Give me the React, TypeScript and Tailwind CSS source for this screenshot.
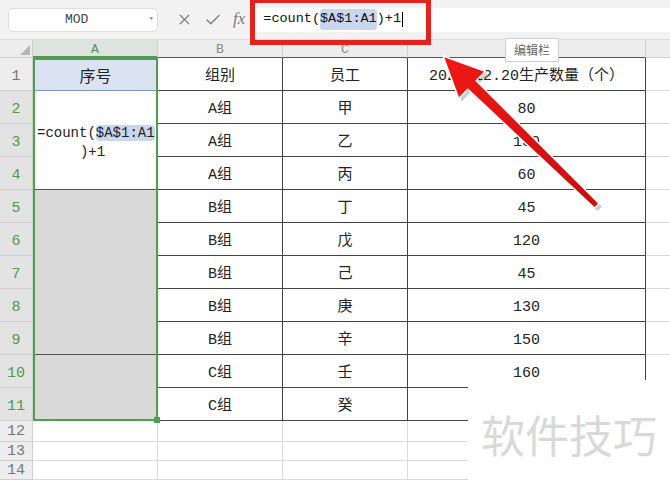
import { X, Check } from "lucide-react";

const rowsB = ["组别", "A组", "A组", "A组", "B组", "B组", "B组", "B组", "B组", "C组", "C组"];
const rowsC = ["员工", "甲", "乙", "丙", "丁", "戊", "己", "庚", "辛", "壬", "癸"];
const rowsD = ["2020.12.20生产数量（个）", "80", "130", "60", "45", "120", "45", "130", "150", "160", ""];

const font = "font-['Liberation_Mono','Noto_Sans_CJK_SC',monospace]";

export default function App() {
  return (
    <div className={`relative w-[670px] h-[480px] overflow-hidden bg-white text-[#222] ${font}`}>
      {/* formula bar */}
      <div className="flex items-center h-[40px] bg-[#f2f2f2] border-b border-[#dcdcdc]">
        <div className="ml-[8px] w-[150px] h-[24px] rounded-[5px] bg-white border border-[#dedede] flex items-center text-[13px] text-[#444]">
          <span className="ml-[56px]">MOD</span>
          <span className="ml-auto mr-[3px] text-[9px] text-[#999]">▾</span>
        </div>
        <div className="flex items-center gap-[11px] ml-[18px] text-[#7a7a7a]">
          <X size={17} strokeWidth={1.6} />
          <Check size={18} strokeWidth={1.8} />
          <span className="italic text-[17px] font-['Liberation_Serif',serif] -mt-[2px]">fx</span>
        </div>
        <div className="ml-[7px] flex-1 h-[24px] bg-white flex items-center pl-[11px] text-[13.5px] text-[#111]">
          <span>=count(</span>
          <span className="bg-[#c9d7ee] rounded-[3px]">$A$1:A1</span>
          <span>)+1</span>
          <span className="w-px h-[15px] bg-black ml-[1px]" />
        </div>
      </div>

      {/* sheet */}
      <div className="grid grid-cols-[33px_125px_125px_125px_238px_24px] grid-rows-[18px_repeat(11,33px)_21px_19px_19px]">
        {/* column headers */}
        <div className="bg-[#ededed] border-r border-b border-[#cfcfcf] flex items-end justify-end p-[2px]">
          <div className="w-0 h-0 border-l-[10px] border-l-transparent border-b-[10px] border-b-[#b5b5b5]" />
        </div>
        <div className="bg-[#dfe3df] border-r border-b-2 border-b-[#4f9a4f] border-r-[#cfcfcf] flex items-center justify-center pt-[3px] text-[13px] text-[#4f9a4f]">
          A
        </div>
        {["B", "C", "D"].map((c) => (
          <div
            key={c}
            className="bg-[#ededed] border-r border-[#cfcfcf] border-b border-b-[#555] flex items-center justify-center pt-[3px] text-[13px] text-[#888]"
          >
            {c === "D" ? "" : c}
          </div>
        ))}
        <div className="bg-[#ededed] border-b border-[#cfcfcf]" />

        {/* column A selection */}
        <div className="col-start-2 row-start-2 row-span-11 flex flex-col border-2 border-[#4f9e4f] relative">
          <div className="h-[31px] shrink-0 bg-[#dbe3f3] border-b border-[#7d93c3] flex items-center justify-center text-[16px] font-['Noto_Sans_CJK_SC',sans-serif]">
            序号
          </div>
          <div className="h-[99px] shrink-0 bg-white border-b border-[#555] flex flex-col justify-center pl-[2px] text-[14px] leading-[19px] pt-[6px]">
            <div>
              =count(<span className="bg-[#c9d7ee] rounded-[4px]">$A$1:A1</span>
            </div>
            <div className="text-center pr-[8px]">)+1</div>
          </div>
          <div className="h-[165px] shrink-0 bg-[#d9d9d9] border-b border-[#555]" />
          <div className="flex-1 bg-[#d9d9d9]" />
          <div className="absolute -right-[4px] -bottom-[4px] w-[6px] h-[6px] bg-[#4f9e4f]" />
        </div>

        {/* rows 1-11 */}
        {rowsB.map((b, i) => (
          <div key={i} className="contents">
            <div
              className={`col-start-1 flex items-center justify-center pt-[6px] border-r border-b border-[#cfcfcf] text-[15px] ${
                i > 0 ? "bg-[#e3e3e3] text-[#4f9a4f]" : "bg-[#ededed] text-[#777]"
              }`}
              style={{ gridRowStart: i + 2 }}
            >
              {i + 1}
            </div>
            <div
              className="col-start-3 border-r border-b border-[#444] flex items-center justify-center pt-[6px] text-[15px]"
              style={{ gridRowStart: i + 2 }}
            >
              {b}
            </div>
            <div
              className="col-start-4 border-r border-b border-[#444] flex items-center justify-center pt-[6px] text-[15px]"
              style={{ gridRowStart: i + 2 }}
            >
              {rowsC[i]}
            </div>
            <div
              className="col-start-5 border-r border-b border-[#444] flex items-center justify-center pt-[6px] text-[15px]"
              style={{ gridRowStart: i + 2 }}
            >
              {rowsD[i]}
            </div>
            <div
              className="col-start-6 border-b border-[#dadada]"
              style={{ gridRowStart: i + 2 }}
            />
          </div>
        ))}

        {/* rows 12-14 */}
        {[12, 13, 14].map((n) => (
          <div key={n} className="contents">
            <div className="flex items-center justify-center pt-[2px] bg-[#ededed] border-r border-b border-[#cfcfcf] text-[15px] text-[#777]">
              {n}
            </div>
            <div className="border-r border-b border-[#dadada]" />
            <div className="border-r border-b border-[#dadada]" />
            <div className="border-r border-b border-[#dadada]" />
            <div className="border-r border-b border-[#dadada]" />
            <div className="border-b border-[#dadada]" />
          </div>
        ))}
      </div>

      {/* tooltip */}
      <div className="absolute left-[505px] top-[38px] w-[54px] h-[24px] bg-white border border-[#cfcfcf] flex items-center justify-center text-[12px] text-[#666] font-['Noto_Sans_CJK_SC',sans-serif]">
        编辑栏
      </div>

      {/* red highlight box */}
      <div className="absolute left-[250px] -top-[2px] w-[181px] h-[47px] border-[5px] border-[#e3221e]" />

      {/* arrow */}
      <svg className="absolute left-0 top-0 pointer-events-none" width="670" height="480">
        <defs>
          <linearGradient id="ar" x1="0" y1="0" x2="1" y2="1">
            <stop offset="0" stopColor="#f01818" />
            <stop offset="1" stopColor="#c80d0d" />
          </linearGradient>
        </defs>
        <polygon
          points="443,56 458.7,98.6 467.8,89.3 594.5,208 599,203.5 476.2,80.7 485.3,71.4"
          fill="#000"
          opacity="0.2"
          transform="translate(3,3)"
        />
        <polygon
          points="443,56 458.7,98.6 467.8,89.3 594.5,208 599,203.5 476.2,80.7 485.3,71.4"
          fill="url(#ar)"
          stroke="#fff"
          strokeWidth="1.5"
          strokeLinejoin="round"
        />
      </svg>

      {/* watermark */}
      <div className="absolute left-[468px] top-[380px] w-[202px] h-[100px] bg-white flex items-center justify-center pt-[8px] text-[44px] text-[#d9d9d9] font-['Noto_Sans_CJK_SC',sans-serif]">
        软件技巧
      </div>
    </div>
  );
}
